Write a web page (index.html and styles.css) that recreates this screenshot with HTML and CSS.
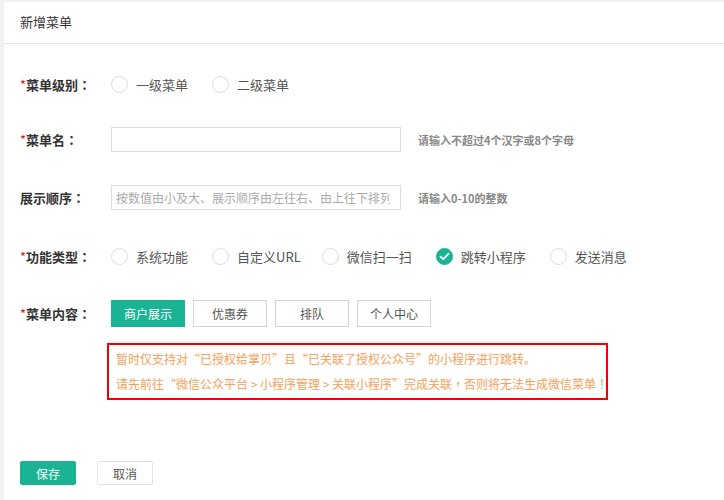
FILE: index.html
```html
<!DOCTYPE html>
<html lang="zh-CN">
<head>
<meta charset="utf-8">
<title>新增菜单</title>
<link rel="stylesheet" href="styles.css">
</head>
<body>
<div class="card">
  <div class="card-head">新增菜单</div>
  <div class="form">
    <div class="row row-level">
      <div class="label"><span class="req">*</span>菜单级别<span class="pc" lang="ja">：</span></div>
      <div class="field">
        <label class="radio"><span class="dot"></span>一级菜单</label>
        <label class="radio"><span class="dot"></span>二级菜单</label>
      </div>
    </div>
    <div class="row row-name">
      <div class="label"><span class="req">*</span>菜单名<span class="pc" lang="ja">：</span></div>
      <div class="field">
        <div class="input"></div>
        <span class="hint">请输入不超过4个汉字或8个字母</span>
      </div>
    </div>
    <div class="row row-order">
      <div class="label">展示顺序<span class="pc" lang="ja">：</span></div>
      <div class="field">
        <div class="input"><span class="placeholder">按数值由小及大、展示顺序由左往右、由上往下排列</span></div>
        <span class="hint">请输入0-10的整数</span>
      </div>
    </div>
    <div class="row row-type">
      <div class="label"><span class="req">*</span>功能类型<span class="pc" lang="ja">：</span></div>
      <div class="field">
        <label class="radio"><span class="dot"></span>系统功能</label>
        <label class="radio radio-url"><span class="dot"></span>自定义URL</label>
        <label class="radio"><span class="dot"></span>微信扫一扫</label>
        <label class="radio"><span class="dot checked"><svg width="11" height="9" viewBox="0 0 11 9"><path d="M1.5 4.6 L4.3 7.2 L9.5 1.8" fill="none" stroke="#fff" stroke-width="1.8" stroke-linecap="round" stroke-linejoin="round"/></svg></span>跳转小程序</label>
        <label class="radio"><span class="dot"></span>发送消息</label>
      </div>
    </div>
    <div class="row row-content">
      <div class="label"><span class="req">*</span>菜单内容<span class="pc" lang="ja">：</span></div>
      <div class="field tabs">
        <span class="tab active">商户展示</span>
        <span class="tab">优惠券</span>
        <span class="tab">排队</span>
        <span class="tab">个人中心</span>
      </div>
    </div>
    <div class="notice">
      <p>暂时仅支持对“已授权给掌贝”且“已关联了授权公众号”的小程序进行跳转。</p>
      <p>请先前往“微信公众平台 &gt; 小程序管理 &gt; 关联小程序”完成关联<span class="pc-tc" lang="zh-TW">，</span>否则将无法生成微信菜单<span class="pc" lang="ja">！</span></p>
    </div>
    <div class="actions">
      <span class="btn btn-primary">保存</span>
      <span class="btn btn-default">取消</span>
    </div>
  </div>
</div>
</body>
</html>
```

FILE: styles.css
```css
* { box-sizing: border-box; }
html, body { margin: 0; padding: 0; }
body {
  background: #f2f2f2;
  padding: 2px 0 0 4px;
  font-family: "Noto Sans CJK SC", "Microsoft YaHei", sans-serif;
  font-size: 13px;
  color: #333;
  width: 724px;
  height: 500px;
  overflow: hidden;
}
.card {
  background: #fff;
  width: 720px;
  height: 498px;
}
.card-head {
  height: 42px;
  line-height: 40px;
  padding-left: 16px;
  border-bottom: 1px solid #e8e8e8;
  font-size: 13px;
  color: #333;
}
.form {
  padding-left: 16px;
  padding-top: 27px;
}
.row {
  display: flex;
  align-items: center;
  height: 26px;
}
.row-name { margin-top: 30px; height: 25px; }
.row-order { margin-top: 33px; height: 25px; }
.row-type { margin-top: 33px; }
.row-content { margin-top: 31px; height: 27px; }
.label {
  width: 91px;
  font-weight: bold;
  font-size: 13px;
  color: #333;
  white-space: nowrap;
}
.pc { font-family: "Noto Sans CJK JP", sans-serif; }
.pc-tc { font-family: "Noto Sans CJK TC", sans-serif; }
.req { color: #e02020; font-weight: normal; }
.field {
  display: flex;
  align-items: center;
}
.radio {
  display: flex;
  align-items: center;
  margin-right: 24px;
  color: #555;
  font-size: 13px;
  white-space: nowrap;
}
.radio-url { margin-right: 21px; }
.dot {
  width: 17px;
  height: 17px;
  border: 1px solid #dcdcdc;
  border-radius: 50%;
  margin-right: 8px;
  display: flex;
  align-items: center;
  justify-content: center;
}
.dot.checked {
  background: #1ab394;
  border-color: #1ab394;
}
.input {
  width: 290px;
  height: 25px;
  border: 1px solid #dedede;
  padding: 0 10px 0 4px;
  white-space: nowrap;
  line-height: 23px;
}
.placeholder {
  display: block;
  overflow: hidden;
  font-size: 12px;
  color: #aaa;
}
.hint {
  margin-left: 17px;
  font-size: 11px;
  font-weight: bold;
  color: #888;
}
.tabs { gap: 8px; height: 27px; }
.tab {
  width: 74px;
  height: 27px;
  border: 1px solid #d4d4d4;
  display: flex;
  align-items: center;
  justify-content: center;
  font-size: 12px;
  color: #555;
}
.tab.active {
  background: #1ab394;
  border-color: #1ab394;
  color: #fff;
}
.notice {
  margin-top: 16px;
  margin-left: 87px;
  width: 501px;
  height: 57px;
  border: 2px solid #f40000;
  padding: 1px 0 0 7px;
}
.notice p {
  margin: 0;
  line-height: 25px;
  font-size: 12px;
  color: #f6a05a;
  white-space: nowrap;
}
.actions {
  margin-top: 61px;
  display: flex;
  gap: 21px;
}
.btn {
  width: 56px;
  height: 24px;
  display: flex;
  align-items: center;
  justify-content: center;
  font-size: 12px;
  border-radius: 2px;
}
.btn-primary {
  background: #1ab394;
  color: #fff;
}
.btn-default {
  background: #fff;
  border: 1px solid #e3e3e3;
  color: #555;
}
```
